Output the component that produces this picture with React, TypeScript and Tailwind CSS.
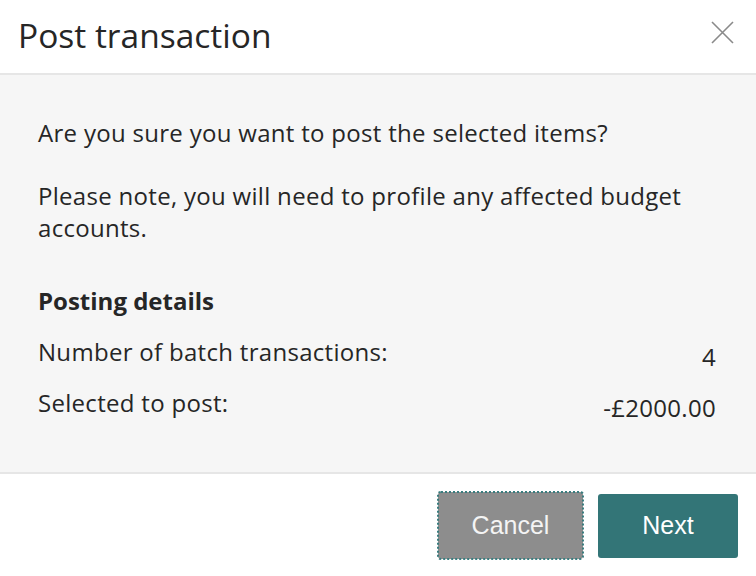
import React from "react";

export default function App() {
  return (
    <div className="w-[756px] h-[576px] bg-white flex flex-col overflow-hidden" style={{ fontFamily: '"Open Sans", "Noto Sans", sans-serif' }}>
      <div className="h-[75px] flex items-center justify-between pl-[18px] pr-[22px] border-b-2 border-[#e6e6e6] shrink-0">
        <div className="text-[33.5px] text-[#262626] leading-none pb-[2px]">Post transaction</div>
        <svg width="23" height="23" viewBox="0 0 23 23" className="mb-[8px]">
          <path d="M1 1 L22 22 M22 1 L1 22" stroke="#8a8a8a" strokeWidth="1.6" fill="none" />
        </svg>
      </div>
      <div className="h-[397px] bg-[#f6f6f6] pl-[38px] pr-[40px] pt-[42px] text-[24px] leading-[32px] tracking-[0.3px] text-[#262626] shrink-0">
        <p>Are you sure you want to post the selected items?</p>
        <p className="mt-[31px]">Please note, you will need to profile any affected budget accounts.</p>
        <p className="mt-[41px] font-bold tracking-normal">Posting details</p>
        <div className="mt-[19px] flex justify-between">
          <span>Number of batch transactions:</span>
          <span className="pt-[5px]">4</span>
        </div>
        <div className="mt-[14px] flex justify-between">
          <span>Selected to post:</span>
          <span className="pt-[5px]">-£2000.00</span>
        </div>
      </div>
      <div className="border-t-2 border-[#e6e6e6] flex justify-end items-start pt-[18px] pr-[18px] gap-[15px]" style={{ fontFamily: '"Liberation Sans", Arial, sans-serif' }}>
        <button className="w-[145px] h-[67px] bg-[#8d8d8d] text-[#f4f4f4] text-[25px] rounded-[3px] outline-2 outline-dotted outline-[#3a7d7f] outline-offset-[-1px]">Cancel</button>
        <button className="w-[140px] h-[64px] mt-[2px] bg-[#337577] text-white text-[25px] rounded-[3px]">Next</button>
      </div>
    </div>
  );
}
